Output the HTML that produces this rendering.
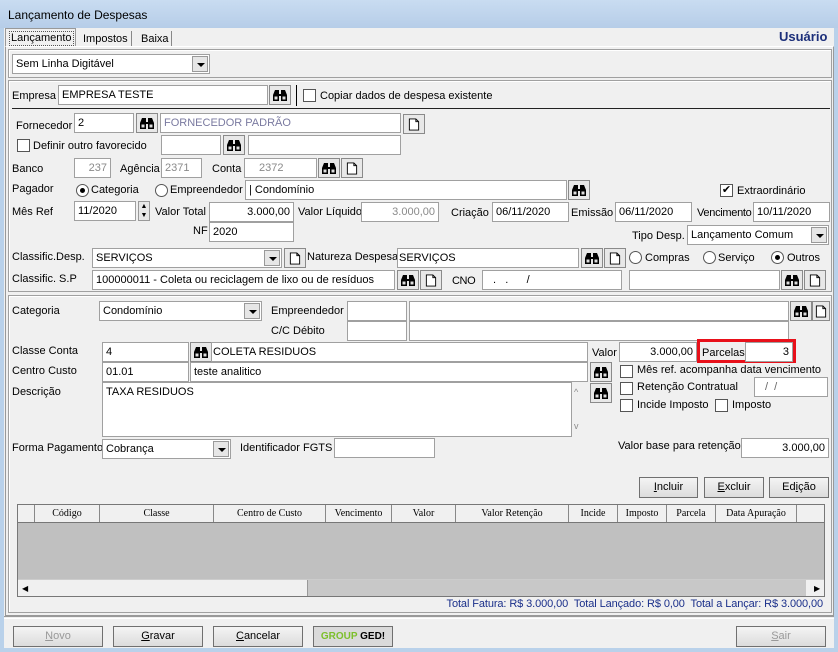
<!DOCTYPE html>
<html><head><meta charset="utf-8"><style>
*{box-sizing:border-box;margin:0;padding:0}
body{width:838px;height:652px;overflow:hidden;background:#b9d1ea;font:11px "Liberation Sans",sans-serif;color:#000;position:relative}
div,span{position:absolute}
.l{white-space:nowrap;line-height:13px}
.i{background:#fff;border:1px solid #a0a0a0;height:20px;padding:2px 3px;white-space:nowrap;overflow:hidden;line-height:14px}
.r{text-align:right}
.g{color:#8a8a8a}
.bt{width:22px;height:20px;border:1px solid #8a8a8a;background:#e8e8e8}
.bt svg{position:absolute;left:3px;top:3px}
.cb{width:13px;height:13px;border:1px solid #555;background:#fff}
.rd{width:13px;height:13px;border:1px solid #555;border-radius:50%;background:#fff}
.rd.on::after{content:"";position:absolute;left:3px;top:3px;width:5px;height:5px;border-radius:50%;background:#000}
.dd{position:absolute;right:1px;top:1px;width:16px;height:16px;background:#e6e6e6;border:1px solid #999}
.dd::after{content:"";position:absolute;left:4px;top:6px;border-left:4px solid transparent;border-right:4px solid transparent;border-top:4px solid #000}
.btn{height:21px;border:1px solid #707070;background:linear-gradient(#f4f4f4,#dcdcdc);text-align:center;line-height:19px}
.grp{border:1px solid #a0a0a0;box-shadow:inset 1px 1px #fff}
.hc{top:0;height:17px;border-right:1px solid #888;text-align:center;font:10px "Liberation Serif",serif;line-height:17px}
</style></head><body>
<svg width="0" height="0" style="position:absolute"><defs>
<symbol id="bi" viewBox="0 0 14 13"><path d="M0 12V6l2-5h4v4h2V1h4l2 5v6H8V7H6v5z" fill="#000"/><rect x="1.5" y="7.5" width="3" height="3" fill="#ddd"/><rect x="9.5" y="7.5" width="3" height="3" fill="#ddd"/></symbol>
<symbol id="dc" viewBox="0 0 12 14"><path d="M1 1h7l3 3v9H1z M8 1v3h3" fill="#fff" stroke="#000"/></symbol>
</defs></svg>
<div style="left:0;top:0;width:838px;height:28px;background:linear-gradient(#c9dcf1,#b6cde8)"></div>
<div class="l" style="left:8px;top:9px;font-size:12px">Lançamento de Despesas</div>
<div style="left:4px;top:28px;width:830px;height:620px;background:#f0f0f0"></div>
<div style="left:5px;top:28px;width:71px;height:19px;border:1px solid #999;border-bottom:none;background:#f0f0f0"></div>
<div class="l" style="left:10px;top:32px;outline:1px dotted #555;padding:0 1px">Lançamento</div>
<div style="left:78px;top:31px;width:54px;height:15px;border-right:1px solid #888"></div>
<div class="l" style="left:83px;top:33px">Impostos</div>
<div style="left:134px;top:31px;width:38px;height:15px;border-right:1px solid #888"></div>
<div class="l" style="left:141px;top:33px">Baixa</div>
<div class="l" style="left:779px;top:30px;font-weight:bold;font-size:13px;color:#1c2f7a">Usuário</div>
<div style="left:5px;top:46px;width:829px;height:570px;border:1px solid #999;border-top-color:#fff"></div>
<div class="grp" style="left:8px;top:49px;width:824px;height:29px"></div>
<div class="i" style="left:12px;top:54px;width:198px">Sem Linha Digitável<span class="dd"></span></div>
<div class="grp" style="left:8px;top:80px;width:824px;height:212px"></div>
<div class="l" style="left:12px;top:90px">Empresa</div>
<div class="i" style="left:58px;top:85px;width:210px">EMPRESA TESTE</div>
<div class="bt" style="left:269px;top:85px"><svg width="14" height="13"><use href="#bi"/></svg></div>
<div style="left:296px;top:85px;width:1px;height:21px;background:#000"></div>
<div class="cb" style="left:303px;top:89px"></div>
<div class="l" style="left:320px;top:90px">Copiar dados de despesa existente</div>
<div style="left:12px;top:108px;width:818px;height:1px;background:#222"></div>
<div class="l" style="left:16px;top:120px">Fornecedor</div>
<div class="i" style="left:74px;top:113px;width:60px">2</div>
<div class="bt" style="left:136px;top:113px"><svg width="14" height="13"><use href="#bi"/></svg></div>
<div class="i g" style="left:160px;top:113px;width:241px;color:#7a7aa0">FORNECEDOR PADRÃO</div>
<div class="bt" style="left:403px;top:114px"><svg width="14" height="13"><use href="#dc"/></svg></div>
<div class="cb" style="left:17px;top:139px"></div>
<div class="l" style="left:33px;top:140px">Definir outro favorecido</div>
<div class="i" style="left:161px;top:135px;width:60px"></div>
<div class="bt" style="left:223px;top:135px"><svg width="14" height="13"><use href="#bi"/></svg></div>
<div class="i" style="left:248px;top:135px;width:153px"></div>
<div class="l" style="left:12px;top:163px">Banco</div>
<div class="i r g" style="left:74px;top:158px;width:37px">237</div>
<div class="l" style="left:120px;top:163px">Agência</div>
<div class="i g" style="left:161px;top:158px;width:41px">2371</div>
<div class="l" style="left:212px;top:163px">Conta</div>
<div class="i g" style="left:244px;top:158px;width:73px;padding-left:14px">2372</div>
<div class="bt" style="left:318px;top:158px"><svg width="14" height="13"><use href="#bi"/></svg></div>
<div class="bt" style="left:341px;top:158px"><svg width="14" height="13"><use href="#dc"/></svg></div>
<div class="l" style="left:12px;top:183px">Pagador</div>
<div class="rd on" style="left:76px;top:184px"></div>
<div class="l" style="left:91px;top:184px">Categoria</div>
<div class="rd" style="left:155px;top:184px"></div>
<div class="l" style="left:170px;top:184px">Empreendedor</div>
<div class="i" style="left:245px;top:180px;width:322px">| Condomínio</div>
<div class="bt" style="left:568px;top:180px"><svg width="14" height="13"><use href="#bi"/></svg></div>
<div class="cb" style="left:720px;top:184px;font-size:11px;line-height:11px;text-align:center">✔</div>
<div class="l" style="left:737px;top:185px">Extraordinário</div>
<div class="l" style="left:12px;top:206px">Mês Ref</div>
<div class="i" style="left:74px;top:201px;width:62px">11/2020</div>
<div style="left:138px;top:201px;width:12px;height:20px;border:1px solid #999;background:#e8e8e8;font-size:7px;line-height:9px;text-align:center">▲<br>▼</div>
<div class="l" style="left:155px;top:206px">Valor Total</div>
<div class="i r" style="left:209px;top:202px;width:85px">3.000,00</div>
<div class="l" style="left:298px;top:206px">Valor Líquido</div>
<div class="i r g" style="left:361px;top:202px;width:78px">3.000,00</div>
<div class="l" style="left:451px;top:207px">Criação</div>
<div class="i" style="left:492px;top:202px;width:77px">06/11/2020</div>
<div class="l" style="left:571px;top:207px">Emissão</div>
<div class="i" style="left:615px;top:202px;width:77px">06/11/2020</div>
<div class="l" style="left:697px;top:207px;letter-spacing:-0.3px">Vencimento</div>
<div class="i" style="left:753px;top:202px;width:77px">10/11/2020</div>
<div class="l" style="left:193px;top:225px">NF</div>
<div class="i" style="left:209px;top:222px;width:85px">2020</div>
<div class="l" style="left:632px;top:230px">Tipo Desp.</div>
<div class="i" style="left:687px;top:225px;width:142px">Lançamento Comum<span class="dd"></span></div>
<div class="l" style="left:12px;top:251px">Classific.Desp.</div>
<div class="i" style="left:92px;top:248px;width:190px">SERVIÇOS<span class="dd"></span></div>
<div class="bt" style="left:284px;top:248px"><svg width="14" height="13"><use href="#dc"/></svg></div>
<div class="l" style="left:307px;top:251px">Natureza Despesa</div>
<div class="i" style="left:397px;top:248px;width:182px;padding-left:1px">SERVIÇOS</div>
<div class="bt" style="left:581px;top:248px"><svg width="14" height="13"><use href="#bi"/></svg></div>
<div class="bt" style="left:604px;top:248px"><svg width="14" height="13"><use href="#dc"/></svg></div>
<div class="rd" style="left:629px;top:251px"></div><div class="l" style="left:645px;top:252px">Compras</div>
<div class="rd" style="left:703px;top:251px"></div><div class="l" style="left:718px;top:252px">Serviço</div>
<div class="rd on" style="left:771px;top:251px"></div><div class="l" style="left:787px;top:252px">Outros</div>
<div class="l" style="left:12px;top:273px">Classific. S.P</div>
<div class="i" style="left:92px;top:270px;width:303px">100000011 - Coleta ou reciclagem de lixo ou de resíduos</div>
<div class="bt" style="left:397px;top:270px"><svg width="14" height="13"><use href="#bi"/></svg></div>
<div class="bt" style="left:420px;top:270px"><svg width="14" height="13"><use href="#dc"/></svg></div>
<div class="l" style="left:452px;top:275px;font-size:11px;letter-spacing:-0.4px">CNO</div>
<div class="i" style="left:482px;top:270px;width:140px;padding-left:10px">.&nbsp;&nbsp;&nbsp;.&nbsp;&nbsp;&nbsp;&nbsp;&nbsp;&nbsp;/</div>
<div class="i" style="left:629px;top:270px;width:151px"></div>
<div class="bt" style="left:781px;top:270px"><svg width="14" height="13"><use href="#bi"/></svg></div>
<div class="bt" style="left:804px;top:270px"><svg width="14" height="13"><use href="#dc"/></svg></div>
<div class="grp" style="left:8px;top:295px;width:824px;height:318px"></div>
<div class="l" style="left:12px;top:305px">Categoria</div>
<div class="i" style="left:99px;top:301px;width:163px">Condomínio<span class="dd"></span></div>
<div class="l" style="left:271px;top:305px">Empreendedor</div>
<div class="i" style="left:347px;top:301px;width:60px"></div>
<div class="i" style="left:409px;top:301px;width:380px"></div>
<div class="bt" style="left:790px;top:301px"><svg width="14" height="13"><use href="#bi"/></svg></div>
<div class="bt" style="left:812px;top:301px;width:18px"><svg width="12" height="13" style="left:2px"><use href="#dc"/></svg></div>
<div class="l" style="left:271px;top:325px">C/C Débito</div>
<div class="i" style="left:347px;top:321px;width:60px"></div>
<div class="i" style="left:409px;top:321px;width:380px"></div>
<div class="l" style="left:12px;top:345px">Classe Conta</div>
<div class="i" style="left:102px;top:342px;width:87px">4</div>
<div class="bt" style="left:190px;top:342px"><svg width="14" height="13"><use href="#bi"/></svg></div>
<div class="i" style="left:211px;top:342px;width:377px;padding-left:1px">COLETA RESIDUOS</div>
<div class="l" style="left:592px;top:347px">Valor</div>
<div class="i r" style="left:619px;top:342px;width:78px">3.000,00</div>
<div style="left:697px;top:339px;width:99px;height:24px;border:3px solid #e8101a"></div>
<div class="l" style="left:702px;top:347px">Parcelas</div>
<div class="i r" style="left:745px;top:342px;width:48px">3</div>
<div class="l" style="left:12px;top:365px">Centro Custo</div>
<div class="i" style="left:102px;top:362px;width:87px">01.01</div>
<div class="i" style="left:190px;top:362px;width:398px">teste analitico</div>
<div class="bt" style="left:590px;top:362px"><svg width="14" height="13"><use href="#bi"/></svg></div>
<div class="cb" style="left:620px;top:365px"></div>
<div class="l" style="left:637px;top:364px">Mês ref. acompanha data vencimento</div>
<div class="l" style="left:12px;top:386px">Descrição</div>
<div class="i" style="left:102px;top:382px;width:470px;height:55px">TAXA RESIDUOS</div>
<div class="l g" style="left:574px;top:386px;font-size:9px">^</div>
<div class="l g" style="left:574px;top:420px;font-size:9px">v</div>
<div class="bt" style="left:590px;top:383px"><svg width="14" height="13"><use href="#bi"/></svg></div>
<div class="cb" style="left:620px;top:382px"></div>
<div class="l" style="left:637px;top:381px">Retenção Contratual</div>
<div class="i" style="left:754px;top:377px;width:74px;padding-left:10px;color:#666">/&nbsp;&nbsp;/</div>
<div class="cb" style="left:620px;top:399px"></div>
<div class="l" style="left:637px;top:399px">Incide Imposto</div>
<div class="cb" style="left:715px;top:399px"></div>
<div class="l" style="left:732px;top:399px">Imposto</div>
<div class="l" style="left:12px;top:442px">Forma Pagamento</div>
<div class="i" style="left:102px;top:439px;width:129px">Cobrança<span class="dd"></span></div>
<div class="l" style="left:240px;top:442px">Identificador FGTS</div>
<div class="i" style="left:334px;top:438px;width:101px"></div>
<div class="l" style="left:618px;top:440px">Valor base para retenção</div>
<div class="i r" style="left:741px;top:438px;width:88px">3.000,00</div>
<div class="btn" style="left:639px;top:477px;width:59px"><u>I</u>ncluir</div>
<div class="btn" style="left:704px;top:477px;width:60px"><u>E</u>xcluir</div>
<div class="btn" style="left:769px;top:477px;width:60px">Ed<u>i</u>ção</div>
<div style="left:17px;top:504px;width:808px;height:93px;border:1px solid #777;background:#c0c0c0">
 <div style="left:0;top:0;width:806px;height:18px;background:#f0f0f0;border-bottom:1px solid #777"></div>
 <div class="hc" style="left:0;width:17px"></div>
 <div class="hc" style="left:17px;width:65px">Código</div>
 <div class="hc" style="left:82px;width:114px">Classe</div>
 <div class="hc" style="left:196px;width:112px">Centro de Custo</div>
 <div class="hc" style="left:308px;width:66px">Vencimento</div>
 <div class="hc" style="left:374px;width:64px">Valor</div>
 <div class="hc" style="left:438px;width:113px">Valor Retenção</div>
 <div class="hc" style="left:551px;width:49px">Incide</div>
 <div class="hc" style="left:600px;width:49px">Imposto</div>
 <div class="hc" style="left:649px;width:49px">Parcela</div>
 <div class="hc" style="left:698px;width:81px">Data Apuração</div>
 <div style="left:0;top:74px;width:806px;height:17px;background:#f0f0f0;border-top:1px solid #ccc"></div>
 <div style="left:17px;top:75px;width:273px;height:16px;background:#f0f0f0;border-right:1px solid #999"></div>
 <div style="left:290px;top:75px;width:498px;height:16px;background:#c8c8c8"></div>
 <div class="l" style="left:4px;top:77px;font-size:8px">◀</div>
 <div class="l" style="left:796px;top:77px;font-size:8px">▶</div>
</div>
<div class="l" style="right:15px;top:598px;color:#1a2f8a;letter-spacing:-0.1px">Total Fatura: R$ 3.000,00&nbsp; Total Lançado: R$ 0,00&nbsp; Total a Lançar: R$ 3.000,00</div>
<div style="left:4px;top:616px;width:830px;height:1px;background:#999"></div>
<div style="left:4px;top:618px;width:830px;height:1px;background:#fff"></div>
<div class="btn" style="left:13px;top:626px;width:90px;color:#999"><u>N</u>ovo</div>
<div class="btn" style="left:113px;top:626px;width:90px"><u>G</u>ravar</div>
<div class="btn" style="left:213px;top:626px;width:90px"><u>C</u>ancelar</div>
<div class="btn" style="left:313px;top:626px;width:80px;font-weight:bold;font-size:10px;background:#dadada"><span style="position:static;color:#7cbf2a">GROUP</span> GED!</div>
<div class="btn" style="left:736px;top:626px;width:90px;color:#999"><u>S</u>air</div>
</body></html>
